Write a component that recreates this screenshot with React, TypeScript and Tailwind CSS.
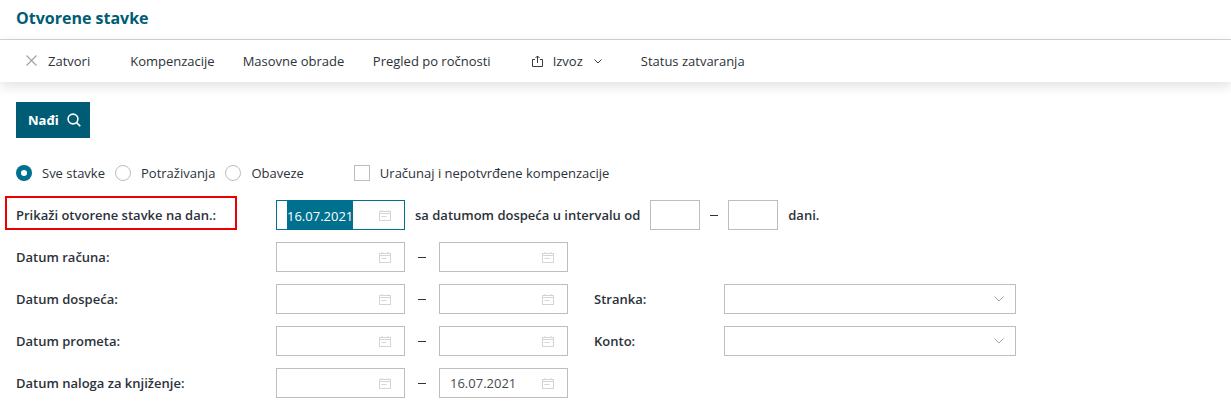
import React from "react";

const Cal = () => (
  <svg width="12" height="11" viewBox="0 0 12 11" fill="none" className="shrink-0" stroke="#d6d4d8">
    <rect x="0.5" y="1.5" width="11" height="9" />
    <path d="M3 0v2M9 0v2" />
    <path d="M0.5 3.5h11" />
    <path d="M2.5 6.5h5" />
  </svg>
);

const DateInput = ({ value, active, selected }: { value?: string; active?: boolean; selected?: boolean }) => (
  <div className={`w-[129px] h-[30px] shrink-0 border flex items-center justify-between pr-[13px] bg-white pl-[10px] ${active ? "border-[#00708f]" : "border-[#bdbdbd]"}`}>
    {selected ? (
      <span className="bg-[#00708f] text-white h-[28px] leading-[30px] w-[66px] overflow-hidden text-[13px] whitespace-nowrap">{value}</span>
    ) : (
      <span className="text-[13px] text-[#444a52] pt-[2px]">{value}</span>
    )}
    <Cal />
  </div>
);

const Dash = () => <span className="w-[34px] shrink-0 flex justify-center"><span className="w-[8px] h-px bg-[#333]" /></span>;

const Label = ({ children }: { children: React.ReactNode }) => (
  <div className="w-[260px] shrink-0 font-semibold text-[13px] text-[#2c323a] pt-[2px]">{children}</div>
);

const Select = () => (
  <div className="w-[292px] h-[30px] border border-[#bdbdbd] flex items-center justify-end pr-[11px] bg-white">
    <svg width="10" height="6" viewBox="0 0 10 6" fill="none" stroke="#a5a5a5"><path d="M0.5 0.5L5 5L9.5 0.5" /></svg>
  </div>
);

const Radio = ({ on }: { on?: boolean }) =>
  on ? (
    <span className="w-4 h-4 rounded-full bg-[#00708f] flex items-center justify-center shrink-0"><span className="w-[6px] h-[6px] rounded-full bg-white" /></span>
  ) : (
    <span className="w-4 h-4 rounded-full border border-[#bdbdbd] shrink-0 ml-[10px]" />
  );

export default function App() {
  return (
    <div className="w-[1231px] h-[408px] overflow-hidden bg-white text-[13px] text-[#2c323a]" style={{ fontFamily: '"Open Sans", sans-serif' }}>
      <div className="h-[40px] border-b border-[#d4d4d4] pl-4 flex items-center">
        <h1 className="text-[16px] font-bold text-[#005c75] pb-[4px]">Otvorene stavke</h1>
      </div>
      <div className="h-[42px] flex items-center shadow-[0_4px_12px_rgba(0,0,0,0.12)] relative">
        <svg width="11" height="11" viewBox="0 0 11 11" className="ml-[26px] mb-[1px]" fill="none" stroke="#a0a0a0" strokeWidth="1.1"><path d="M0.5 0.5l10 10M10.5 0.5l-10 10" /></svg>
        <span className="ml-[11px] pt-[2px]">Zatvori</span>
        <span className="ml-[40px] pt-[2px]">Kompenzacije</span>
        <span className="ml-[28px] pt-[2px]">Masovne obrade</span>
        <span className="ml-[28.5px] pt-[2px]">Pregled po ročnosti</span>
        <svg width="11" height="12" viewBox="0 0 11 12" className="ml-[41px]" fill="none" stroke="#3a3a3a"><path d="M3 4.5H.5v7h10v-7H8M5.5 8V1M3.5 3l2-2 2 2" /></svg>
        <span className="ml-[10px] pt-[2px]">Izvoz</span>
        <svg width="8" height="5" viewBox="0 0 8 5" className="ml-[11.5px]" fill="none" stroke="#3a3a3a"><path d="M.5 .5L4 4L7.5 .5" /></svg>
        <span className="ml-[38.5px] pt-[2px]">Status zatvaranja</span>
      </div>

      <div className="px-4 pt-5">
        <button className="w-[74px] h-[36px] bg-[#005c75] text-white font-bold text-[13px] flex items-center pl-3 gap-[8px]">
          <span className="pt-[2px]">Nađi</span>
          <svg width="14" height="14" viewBox="0 0 14 14" fill="none" stroke="white" strokeWidth="1.6"><circle cx="6" cy="6" r="4.9" /><path d="M9.6 9.6L13.3 13.3" /></svg>
        </button>

        <div className="mt-[26px] h-[18px] flex items-center">
          <Radio on />
          <span className="ml-[10px] pt-[2px]">Sve stavke</span>
          <Radio />
          <span className="ml-[10px] pt-[2px]">Potraživanja</span>
          <Radio />
          <span className="ml-[10px] pt-[2px]">Obaveze</span>
          <span className="ml-[50px] w-4 h-4 border border-[#bdbdbd]" />
          <span className="ml-[10px] pt-[2px]">Uračunaj i nepotvrđene kompenzacije</span>
        </div>

        <div className="mt-[18px] flex flex-col gap-3">
          <div className="flex items-center h-[30px] relative">
            <div className="absolute left-[-11px] top-[-4px] w-[232px] h-[34px] border-2 border-[#ee0000]" />
            <Label>Prikaži otvorene stavke na dan.:</Label>
            <DateInput value="16.07.2021" active selected />
            <span className="ml-[10px] font-semibold pt-[2px]">sa datumom dospeća u intervalu od</span>
            <div className="ml-[10px] w-[50px] h-[30px] border border-[#bdbdbd]" />
            <span className="w-[28px] flex justify-center"><span className="w-[8px] h-px bg-[#333]" /></span>
            <div className="w-[50px] h-[30px] border border-[#bdbdbd]" />
            <span className="ml-[10px] font-semibold pt-[2px]">dani.</span>
          </div>
          <div className="flex items-center h-[30px]">
            <Label>Datum računa:</Label>
            <DateInput /><Dash /><DateInput />
          </div>
          <div className="flex items-center h-[30px]">
            <Label>Datum dospeća:</Label>
            <DateInput /><Dash /><DateInput />
            <div className="ml-[26px] w-[130px] font-semibold pt-[2px]">Stranka:</div>
            <Select />
          </div>
          <div className="flex items-center h-[30px]">
            <Label>Datum prometa:</Label>
            <DateInput /><Dash /><DateInput />
            <div className="ml-[26px] w-[130px] font-semibold pt-[2px]">Konto:</div>
            <Select />
          </div>
          <div className="flex items-center h-[30px]">
            <Label>Datum naloga za knjiženje:</Label>
            <DateInput /><Dash /><DateInput value="16.07.2021" />
          </div>
        </div>
      </div>
    </div>
  );
}
